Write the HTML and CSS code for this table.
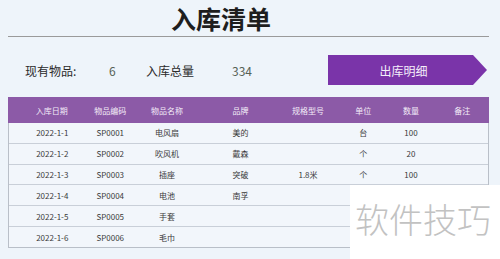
FILE: index.html
```html
<!DOCTYPE html>
<html lang="zh-CN">
<head>
<meta charset="utf-8">
<link rel="stylesheet" href="styles.css">
</head>
<body>
<div class="page">
  <h1 class="title">入库清单</h1>
  <div class="stats">
    <span class="label l1">现有物品:</span>
    <span class="value v1">6</span>
    <span class="label l2">入库总量</span>
    <span class="value v2">334</span>
    <div class="btn"><span>出库明细</span></div>
  </div>
  <div class="table">
    <div class="row head">
      <div class="c c1">入库日期</div><div class="c c2">物品编码</div><div class="c c3">物品名称</div><div class="c c4">品牌</div><div class="c c5">规格型号</div><div class="c c6">单位</div><div class="c c7">数量</div><div class="c c8">备注</div>
    </div>
    <div class="row">
      <div class="c c1">2022-1-1</div><div class="c c2">SP0001</div><div class="c c3">电风扇</div><div class="c c4">美的</div><div class="c c5"></div><div class="c c6">台</div><div class="c c7">100</div><div class="c c8"></div>
    </div>
    <div class="row">
      <div class="c c1">2022-1-2</div><div class="c c2">SP0002</div><div class="c c3">吹风机</div><div class="c c4">戴森</div><div class="c c5"></div><div class="c c6">个</div><div class="c c7">20</div><div class="c c8"></div>
    </div>
    <div class="row">
      <div class="c c1">2022-1-3</div><div class="c c2">SP0003</div><div class="c c3">插座</div><div class="c c4">突破</div><div class="c c5">1.8米</div><div class="c c6">个</div><div class="c c7">100</div><div class="c c8"></div>
    </div>
    <div class="row">
      <div class="c c1">2022-1-4</div><div class="c c2">SP0004</div><div class="c c3">电池</div><div class="c c4">南孚</div><div class="c c5"></div><div class="c c6"></div><div class="c c7"></div><div class="c c8"></div>
    </div>
    <div class="row">
      <div class="c c1">2022-1-5</div><div class="c c2">SP0005</div><div class="c c3">手套</div><div class="c c4"></div><div class="c c5"></div><div class="c c6"></div><div class="c c7"></div><div class="c c8"></div>
    </div>
    <div class="row last">
      <div class="c c1">2022-1-6</div><div class="c c2">SP0006</div><div class="c c3">毛巾</div><div class="c c4"></div><div class="c c5"></div><div class="c c6"></div><div class="c c7"></div><div class="c c8"></div>
    </div>
  </div>
</div>
<div class="watermark">软件技巧</div>
</body>
</html>
```
FILE: styles.css
```css
html, body {
  margin: 0;
  padding: 0;
}
body {
  width: 500px;
  height: 259px;
  overflow: hidden;
  background: #eef4fa;
  font-family: "Noto Sans CJK SC", "Noto Sans", sans-serif;
  color: #3a3a3a;
  position: relative;
}
.page {
  padding: 0 11px 0 8px;
}
.title {
  margin: 0;
  height: 36px;
  line-height: 37px;
  font-size: 25px;
  font-weight: 700;
  color: #1e1e1e;
  text-align: center;
  padding-right: 55px;
  border-bottom: 1px solid #9a9a9a;
}
.stats {
  display: flex;
  align-items: center;
  height: 30px;
  margin-top: 18px;
  font-size: 12px;
}
.label {
  color: #2a2a2a;
}
.l1 {
  width: 84px;
  padding-left: 17px;
}
.v1 {
  width: 37px;
}
.l2 {
  width: 86px;
}
.v2 {
  width: 96px;
}
.value {
  color: #566256;
}
.btn {
  width: 159px;
  height: 30px;
  background: #7a34a9;
  clip-path: polygon(0 0, calc(100% - 14px) 0, 100% 50%, calc(100% - 14px) 100%, 0 100%);
  color: #f4eefa;
  display: flex;
  align-items: center;
  padding-right: 14px;
  box-sizing: border-box;
}
.btn span {
  flex: 1;
  text-align: center;
  padding-left: 6px;
}
.table {
  margin-top: 12px;
  border-left: 1px solid #b9bfc8;
  border-right: 1px solid #b9bfc8;
  background: #f2f6fb;
  font-size: 8px;
}
.row {
  display: grid;
  grid-template-columns: 72.5px 57.5px 66px 71px 60px 50.5px 49px 52.5px;
  height: 20.83px;
  align-items: center;
  border-bottom: 1px solid #c9cfd8;
  box-sizing: border-box;
}
.row.head {
  height: 26px;
  background: #8c5aa7;
  color: #f3ecf8;
  border-bottom: none;
  margin-left: -1px;
  margin-right: -1px;
  grid-template-columns: 73.5px 57.5px 66px 71px 60px 50.5px 49px 53.5px;
}
.row.last {
  border-bottom: 1px solid #b9bfc8;
}
.c {
  text-align: center;
  white-space: nowrap;
}
.c1 {
  padding-left: 14px;
}
.c3 {
  padding-right: 10px;
}
.c5, .c6 {
  padding-left: 4px;
}
.watermark {
  position: absolute;
  left: 350px;
  top: 185px;
  width: 150px;
  height: 74px;
  background: #ffffff;
  color: #c2c2c2;
  font-size: 34px;
  font-weight: 300;
  line-height: 68px;
  padding-left: 5px;
  box-sizing: border-box;
  white-space: nowrap;
}
```
